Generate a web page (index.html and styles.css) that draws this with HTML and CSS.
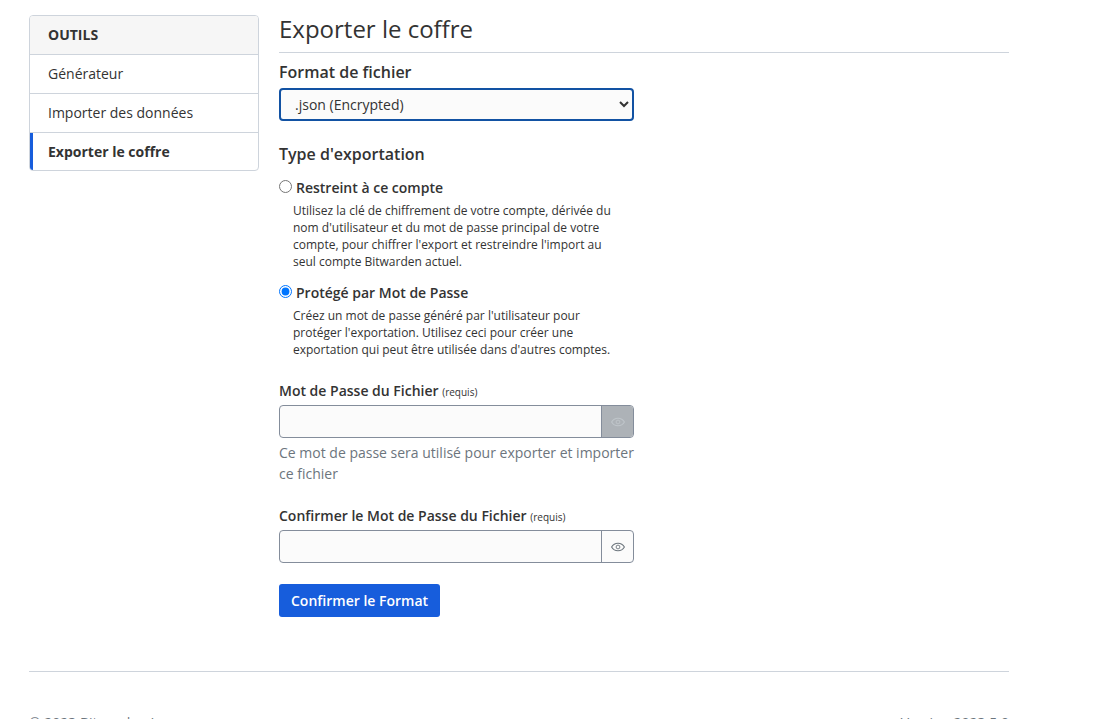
FILE: index.html
```html
<!DOCTYPE html>
<html lang="fr">
<head>
<meta charset="utf-8">
<meta name="viewport" content="width=device-width, initial-scale=1">
<title>Exporter le coffre</title>
<link rel="stylesheet" href="styles.css">
</head>
<body>
<svg class="sprite" aria-hidden="true">
  <symbol id="eye" viewBox="0 0 14 10">
    <path d="M.6 5C2 2.500 4.200 1.200 7 1.200S12 2.500 13.400 5C12 7.500 9.800 8.800 7 8.800S2 7.500.6 5Z" fill="none" stroke="currentColor" stroke-width="1.100" stroke-linejoin="round"/>
    <circle cx="7" cy="5" r="1.900" fill="none" stroke="currentColor" stroke-width=".9"/>
  </symbol>
</svg>
<div class="page">
  <div class="layout">
    <nav class="tools" aria-label="Outils">
      <div class="tools-header">OUTILS</div>
      <a class="tools-item" href="#generateur">Générateur</a>
      <a class="tools-item" href="#importer">Importer des données</a>
      <a class="tools-item active" href="#exporter" aria-current="page">Exporter le coffre</a>
    </nav>
    <main class="content">
      <h1 class="title">Exporter le coffre</h1>
      <form class="form">
        <label class="section-label" for="format">Format de fichier</label>
        <select class="select" id="format">
          <option>.json (Encrypted)</option>
          <option>.json</option>
          <option>.csv</option>
        </select>

        <fieldset class="types">
          <legend class="section-label">Type d'exportation</legend>
          <div class="choice">
            <input class="radio" type="radio" name="type" id="account" aria-describedby="account-help">
            <label class="label" for="account">Restreint à ce compte</label>
          </div>
          <p class="choice-help" id="account-help">Utilisez la clé de chiffrement de votre compte, dérivée du nom d'utilisateur et du mot de passe principal de votre compte, pour chiffrer l'export et restreindre l'import au seul compte Bitwarden actuel.</p>
          <div class="choice">
            <input class="radio" type="radio" name="type" id="password" aria-describedby="password-help" checked>
            <label class="label" for="password">Protégé par Mot de Passe</label>
          </div>
          <p class="choice-help" id="password-help">Créez un mot de passe généré par l'utilisateur pour protéger l'exportation. Utilisez ceci pour créer une exportation qui peut être utilisée dans d'autres comptes.</p>
        </fieldset>

        <div class="field">
          <label class="label" for="file-password">Mot de Passe du Fichier <span class="required">(requis)</span></label>
          <div class="input-group">
            <input class="input" type="password" id="file-password">
            <button class="toggle hovered" type="button" aria-label="Afficher le mot de passe"><svg class="eye"><use href="#eye"/></svg></button>
          </div>
          <p class="hint">Ce mot de passe sera utilisé pour exporter et importer ce fichier</p>
        </div>

        <div class="field">
          <label class="label" for="confirm-password">Confirmer le Mot de Passe du Fichier <span class="required">(requis)</span></label>
          <div class="input-group">
            <input class="input" type="password" id="confirm-password">
            <button class="toggle" type="button" aria-label="Afficher le mot de passe"><svg class="eye"><use href="#eye"/></svg></button>
          </div>
        </div>

        <button class="submit" type="submit">Confirmer le Format</button>
      </form>
    </main>
  </div>
  <footer class="footer">
    <span>© 2023 Bitwarden Inc.</span>
    <span>Version 2023.5.0</span>
  </footer>
</div>
</body>
</html>
```

FILE: styles.css
```css
*, *::before, *::after {
  box-sizing: border-box;
}

html {
  overflow: hidden;
  height: 100%;
}

body {
  margin: 0;
  background: #fff;
  color: #333;
  font: 14px/21px "Open Sans", "Noto Sans", sans-serif;
}

.sprite {
  display: none;
}

.page {
  max-width: 1038px;
  padding: 15px 29px 0;
}

.layout {
  display: flex;
  align-items: flex-start;
  gap: 20px;
}

.tools {
  flex: 0 0 230px;
  overflow: hidden;
  border: 1px solid #ced4dc;
  border-radius: 4px;
}

.tools-header,
.tools-item {
  display: block;
  padding: 8px 18px 9px;
  border-bottom: 1px solid #ced4dc;
  color: #333;
  text-decoration: none;
}

.tools-header {
  background: #f6f6f6;
  font-weight: 700;
}

.tools-item.active {
  padding-left: 15px;
  padding-bottom: 8px;
  border-left: 3px solid #175ddc;
  border-bottom: 0;
  font-weight: 700;
}

.content {
  flex: 1;
  min-width: 0;
}

.title {
  margin: 0 0 8px;
  padding-bottom: 10px;
  border-bottom: 1px solid #ced4dc;
  font-size: 24px;
  line-height: 27px;
  font-weight: 400;
}

.form {
  width: 50%;
  padding-right: 10px;
}

.section-label {
  display: block;
  margin-bottom: 4px;
  padding: 0;
  font-size: 16px;
  line-height: 23px;
  font-weight: 600;
}

.select {
  display: block;
  width: 100%;
  height: 33px;
  padding: 0 0 0 10px;
  border: 2px solid #1252a3;
  border-radius: 4px;
  outline: 0;
  background: #fbfbfb;
  color: #333;
  font: inherit;
}

.types {
  min-width: 0;
  margin: 22px 0 10px;
  padding: 0;
  border: 0;
}

.types .section-label {
  margin-bottom: 11px;
}

.choice {
  display: flex;
  align-items: flex-start;
  gap: 4px;
}

.radio {
  width: 13px;
  height: 13px;
  margin: 3px 0 0;
}

.label {
  font-weight: 600;
}

.choice-help {
  margin: 4px 14px 12px;
  font-size: 12px;
  line-height: 17px;
}

.field {
  margin-bottom: 21px;
}

.field .label {
  display: block;
  margin-bottom: 2px;
}

.required {
  font-size: 10px;
  font-weight: 400;
}

.input-group {
  display: flex;
  height: 33px;
  overflow: hidden;
  border: 1px solid #848d9b;
  border-radius: 4px;
  background: #fbfbfb;
}

.input {
  flex: 1;
  min-width: 0;
  padding: 0 11px;
  border: 0;
  outline: 0;
  background: transparent;
  color: #333;
  font: inherit;
}

.toggle {
  display: flex;
  align-items: center;
  justify-content: center;
  width: 32px;
  padding: 0;
  border: 0;
  border-left: 1px solid #848d9b;
  background: transparent;
  color: #6c757d;
}

.toggle.hovered {
  background: #adb2b7;
  color: #bfc5ca;
}

.eye {
  width: 14px;
  height: 10px;
}

.hint {
  margin: 4px 0 0;
  color: #6c757d;
}

.submit {
  display: block;
  padding: 6px 12px;
  border: 0;
  border-radius: 3px;
  background: #175ddc;
  color: #fff;
  font: inherit;
  font-weight: 600;
}

.footer {
  display: flex;
  justify-content: space-between;
  margin-top: 54px;
  padding: 40px 0;
  border-top: 1px solid #ced4dc;
  color: #6c757d;
}
```
